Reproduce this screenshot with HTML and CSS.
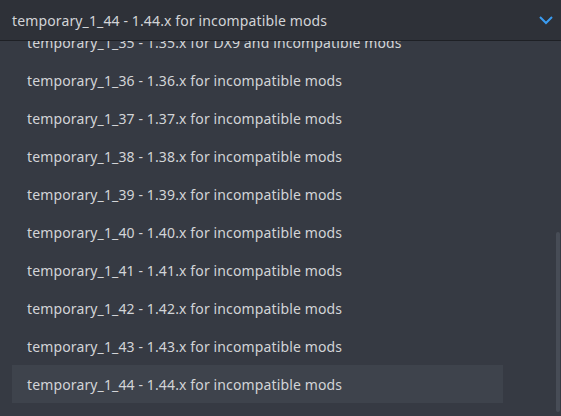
FILE: index.html
```html
<!DOCTYPE html>
<html>
<head>
<meta charset="utf-8">
<link rel="stylesheet" href="styles.css">
</head>
<body>
<div class="dropdown">
  <div class="header">
    <span class="value">temporary_1_44 - 1.44.x for incompatible mods</span>
    <svg class="chevron" width="14" height="10" viewBox="0 0 14 10"><path d="M1 2 L7 8 L13 2" fill="none" stroke="#3a9cf2" stroke-width="2"/></svg>
  </div>
  <div class="list">
    <div class="items">
      <div class="item">temporary_1_35 - 1.35.x for DX9 and incompatible mods</div>
      <div class="item">temporary_1_36 - 1.36.x for incompatible mods</div>
      <div class="item">temporary_1_37 - 1.37.x for incompatible mods</div>
      <div class="item">temporary_1_38 - 1.38.x for incompatible mods</div>
      <div class="item">temporary_1_39 - 1.39.x for incompatible mods</div>
      <div class="item">temporary_1_40 - 1.40.x for incompatible mods</div>
      <div class="item">temporary_1_41 - 1.41.x for incompatible mods</div>
      <div class="item">temporary_1_42 - 1.42.x for incompatible mods</div>
      <div class="item">temporary_1_43 - 1.43.x for incompatible mods</div>
      <div class="item selected">temporary_1_44 - 1.44.x for incompatible mods</div>
    </div>
    <div class="scrollbar"></div>
  </div>
</div>
</body>
</html>
```
FILE: styles.css
```css
html, body {
  margin: 0;
  padding: 0;
  background: #363a43;
}
.dropdown {
  width: 561px;
  height: 416px;
  font-family: "Noto Sans", "Open Sans", sans-serif;
  font-size: 14px;
  letter-spacing: 0.13px;
  color: #d2d4d7;
  display: flex;
  flex-direction: column;
}
.header {
  height: 40px;
  flex: none;
  background: #2e3138;
  border-bottom: 1px solid #1e2025;
  display: flex;
  align-items: center;
  padding: 0 8px 0 12px;
  position: relative;
  z-index: 2;
}
.value {
  flex: 1;
}
.chevron {
  flex: none;
}
.list {
  flex: 1;
  position: relative;
  overflow: hidden;
  background: #363a43;
}
.items {
  margin-top: -18px;
  padding-left: 12px;
  width: 491px;
}
.item {
  height: 38px;
  display: flex;
  align-items: center;
  padding-left: 15px;
  white-space: nowrap;
}
.item.selected {
  background: #3e434c;
}
.scrollbar {
  position: absolute;
  right: 1px;
  top: 191px;
  width: 4px;
  height: 180px;
  border-radius: 2px;
  background: #474c56;
}
```
